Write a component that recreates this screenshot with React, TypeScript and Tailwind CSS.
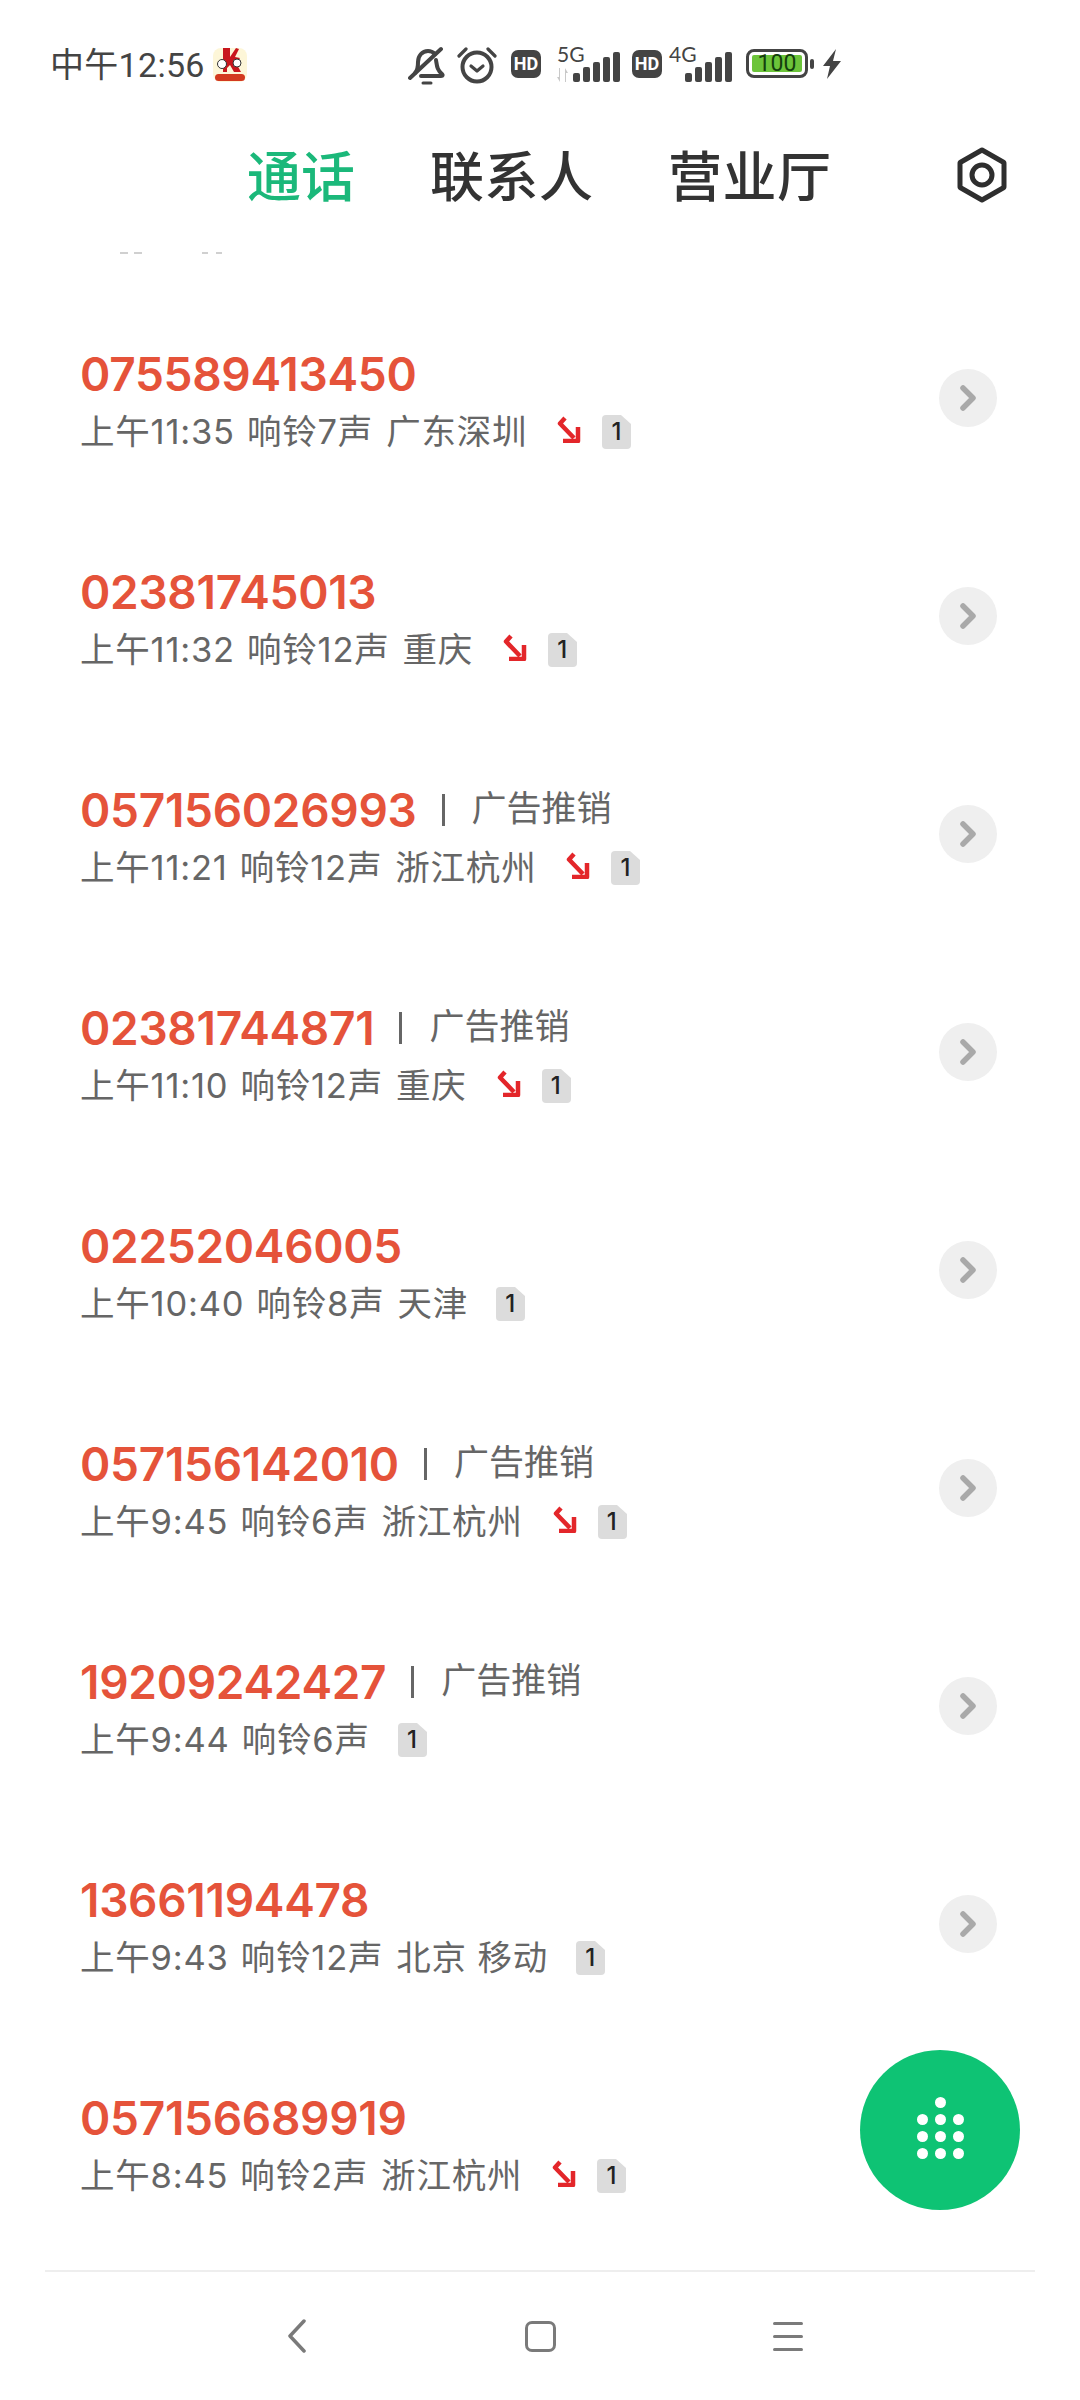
import React from 'react';

type Call = {
  number: string;
  tag?: boolean;
  time: string;
  ring: string;
  place: string;
  missed: boolean;
};

const calls: Call[] = [
  { number: '075589413450', time: '上午11:35', ring: '响铃7声', place: '广东深圳', missed: true },
  { number: '02381745013', time: '上午11:32', ring: '响铃12声', place: '重庆', missed: true },
  { number: '057156026993', tag: true, time: '上午11:21', ring: '响铃12声', place: '浙江杭州', missed: true },
  { number: '02381744871', tag: true, time: '上午11:10', ring: '响铃12声', place: '重庆', missed: true },
  { number: '02252046005', time: '上午10:40', ring: '响铃8声', place: '天津', missed: false },
  { number: '057156142010', tag: true, time: '上午9:45', ring: '响铃6声', place: '浙江杭州', missed: true },
  { number: '19209242427', tag: true, time: '上午9:44', ring: '响铃6声', place: '', missed: false },
  { number: '13661194478', time: '上午9:43', ring: '响铃12声', place: '北京 移动', missed: false },
  { number: '057156689919', time: '上午8:45', ring: '响铃2声', place: '浙江杭州', missed: true },
];

const Signal = () => (
  <svg width="47" height="30" viewBox="0 0 47 30" className="absolute right-0 bottom-0">
    <rect x="0" y="21" width="7" height="9" rx="2" fill="#444" />
    <rect x="10" y="15" width="7" height="15" rx="2" fill="#444" />
    <rect x="20" y="10" width="7" height="20" rx="2" fill="#444" />
    <rect x="30" y="5" width="7" height="25" rx="2" fill="#444" />
    <rect x="40" y="0" width="7" height="30" rx="2" fill="#444" />
  </svg>
);

const HdBadge = () => (
  <div className="w-[30px] h-[28px] rounded-[7px] bg-[#444] flex items-center justify-center text-white text-[18px] font-bold leading-none">
    HD
  </div>
);

const StatusBar = () => (
  <div className="h-[128px] shrink-0 pl-[50px] pt-[44px] flex items-start text-[#444]">
    <span className="w-[154px] whitespace-nowrap text-[34px] leading-[42px] font-normal tracking-[0.3px]">中午12:56</span>
    <svg width="36" height="36" viewBox="0 0 36 36" className="ml-[8px] mt-[3px]">
      <rect x="1" y="1" width="34" height="34" rx="8" fill="#fdf6d8" />
      <path d="M11 1h7v9l6-9 3 1-4 8 5 1-4 5 5 9h-7l-4-7-3 3v4h-4z" fill="#c8161d" />
      <circle cx="10" cy="17" r="4.5" fill="#fff" stroke="#333" strokeWidth="1" />
      <circle cx="25" cy="16" r="4" fill="#fff" stroke="#333" strokeWidth="1" />
      <rect x="3" y="27" width="30" height="7" rx="3.5" fill="#d3391f" />
    </svg>
    <div className="ml-[160px] flex items-start">
      <svg width="38" height="40" viewBox="0 0 38 40" className="mt-[2px]" fill="none" stroke="#444" strokeLinecap="round" strokeLinejoin="round">
        <path d="M7 27c3-3 3-6 3-11 0-6 4-11 10-11 3 0 5 1 7 3" strokeWidth="4" />
        <path d="M28 14c1 6 1 10 6 14 1 1 1 2-1 2H13" strokeWidth="4" />
        <path d="M2 32 33 3" strokeWidth="4" />
        <path d="M15 37h8" strokeWidth="3" />
      </svg>
      <svg width="40" height="38" viewBox="0 0 40 38" className="ml-[11px] mt-[2px]" fill="none" stroke="#444" strokeLinecap="round" strokeLinejoin="round">
        <circle cx="20" cy="21" r="14.5" strokeWidth="4" />
        <path d="M14 20l6 5 6-5" strokeWidth="3.2" />
        <path d="M2 10 9 3M38 10l-7-7" strokeWidth="3.2" />
      </svg>
      <div className="ml-[14px] mt-[6px]">
        <HdBadge />
      </div>
      <div className="relative ml-[16px] w-[63px] h-[36px] mt-[2px]">
        <span className="absolute left-0 top-[-3px] text-[21px] leading-[22px]" style={{ fontFamily: 'Lato, sans-serif' }}>5G</span>
        <svg width="14" height="14" viewBox="0 0 14 14" className="absolute left-0 bottom-0">
          <path d="M2 0v9H0l3 5V0zM9 14V5h2L8 0v14z" fill="#c9c9c9" />
        </svg>
        <Signal />
      </div>
      <div className="ml-[12px] mt-[6px]">
        <HdBadge />
      </div>
      <div className="relative ml-[7px] w-[63px] h-[36px] mt-[2px]">
        <span className="absolute left-0 top-[-3px] text-[21px] leading-[22px]" style={{ fontFamily: 'Lato, sans-serif' }}>4G</span>
        <Signal />
      </div>
      <div className="ml-[14px] mt-[5px] w-[62px] h-[29px] rounded-[8px] border-[3px] border-[#444] p-[3px] flex">
        <div className="flex-1 rounded-[2px] bg-[#6cc43a] flex items-center justify-center text-[#14400e] text-[23px] leading-none">100</div>
      </div>
      <div className="ml-[2px] mt-[15px] w-[4px] h-[10px] rounded-[2px] bg-[#444]" />
      <svg width="20" height="30" viewBox="0 0 20 30" className="ml-[8px] mt-[5px]">
        <path d="M14 0 1 17h7L5 30l14-18h-8z" fill="#444" />
      </svg>
    </div>
  </div>
);

const Header = () => (
  <div className="relative h-[128px] shrink-0 flex items-start pl-[247px] pt-[19px] text-[54px] leading-[64px] font-medium text-[#333] whitespace-nowrap">
    <span className="text-[#1bb87a] w-[108px]">通话</span>
    <span className="ml-[75px] w-[165px] tracking-[0.5px]">联系人</span>
    <span className="ml-[73px] w-[165px] tracking-[0.5px]">营业厅</span>
    <svg width="52" height="56" viewBox="0 0 52 56" className="ml-[123px]" fill="none" stroke="#2e2e2e">
      <path d="M26 3 47 15a2 2 0 0 1 1 2v22a2 2 0 0 1-1 2L26 53 5 41a2 2 0 0 1-1-2V17a2 2 0 0 1 1-2z" strokeWidth="5" strokeLinejoin="round" />
      <circle cx="26" cy="28" r="10" strokeWidth="5" />
    </svg>
    {/* remains of the row scrolled away under the header */}
    <svg width="110" height="8" viewBox="0 0 110 8" className="absolute left-[118px] bottom-0" fill="#d0d0d0">
      <rect x="2" y="4" width="8" height="2" />
      <rect x="16" y="4" width="8" height="2" />
      <rect x="84" y="4" width="6" height="2" />
      <rect x="98" y="4" width="6" height="2" />
    </svg>
  </div>
);

const MissedArrow = () => (
  <svg width="24" height="28" viewBox="0 0 24 28" className="ml-[30px] mb-[6px]" fill="none" stroke="#e3262a" strokeWidth="4.5" strokeLinejoin="round">
    <path d="M8 3 3 8.5 17 23" />
    <path d="M21 12v14H6" />
  </svg>
);

const SimBadge = ({ missed }: { missed: boolean }) => (
  <div
    className={`relative w-[29px] h-[34px] flex items-center justify-center text-[24px] leading-none font-medium text-[#222] ${
      missed ? 'ml-[21px]' : 'ml-[28px]'
    }`}
  >
    <svg width="29" height="34" viewBox="0 0 29 34" className="absolute inset-0">
      <path d="M4 0h15l10 9v21a4 4 0 0 1-4 4H4a4 4 0 0 1-4-4V4a4 4 0 0 1 4-4z" fill="#dcdcdc" />
    </svg>
    <span className="relative">1</span>
  </div>
);

const CallRow = ({ call }: { call: Call }) => (
  <div className="h-[218px] shrink-0 flex items-center pl-[80px] pr-[83px]">
    <div className="flex-1 pt-[8px]">
      <div className="flex items-center h-[52px]">
        <span className="text-[46px] leading-[52px] font-semibold tracking-[-0.3px] text-[#e5533a]" style={{ fontFamily: 'Inter, sans-serif' }}>
          {call.number}
        </span>
        {call.tag && (
          <>
            <span className="ml-[25px] w-[3px] h-[32px] bg-[#666]" />
            <span className="ml-[27px] text-[35px] leading-[40px] text-[#666]">广告推销</span>
          </>
        )}
      </div>
      <div
        className="mt-[7px] flex items-center h-[50px] text-[34.5px] tracking-[0.8px] text-[#666] whitespace-nowrap"
        style={{ fontFamily: 'Inter, "Noto Sans CJK SC", sans-serif' }}
      >
        <span>{call.time}</span>
        <span className="ml-[12px]">{call.ring}</span>
        {call.place && <span className="ml-[13px]">{call.place}</span>}
        {call.missed && <MissedArrow />}
        <SimBadge missed={call.missed} />
      </div>
    </div>
    <div className="w-[58px] h-[58px] rounded-full bg-[#efefef] flex items-center justify-center">
      <svg width="18" height="26" viewBox="0 0 18 26" fill="none" stroke="#a9a9a9" strokeWidth="5.5" strokeLinecap="round" strokeLinejoin="round">
        <path d="M4 3l10 10L4 23" />
      </svg>
    </div>
  </div>
);

const BottomNav = () => (
  <div className="h-[130px] shrink-0 px-[45px] bg-white">
    <div className="h-full border-t-2 border-[#eeeeee] flex items-center">
      <svg width="20" height="34" viewBox="0 0 20 34" className="ml-[242px]" fill="none" stroke="#7a7a7a" strokeWidth="3.5" strokeLinecap="round" strokeLinejoin="round">
        <path d="M17 2 3 17l14 15" />
      </svg>
      <div className="ml-[218px] w-[31px] h-[31px] rounded-[7px] border-[3.5px] border-[#7a7a7a]" />
      <div className="ml-[217px] w-[30px] flex flex-col gap-y-[10px]">
        <div className="h-[3px] rounded-full bg-[#7a7a7a]" />
        <div className="h-[3px] rounded-full bg-[#7a7a7a]" />
        <div className="h-[3px] rounded-full bg-[#7a7a7a]" />
      </div>
    </div>
  </div>
);

const DialFab = () => (
  <div className="absolute left-[860px] top-[2050px] w-[160px] h-[160px] pb-[5px] rounded-full bg-[#0ec374] flex flex-col items-center justify-center gap-y-[6px]">
    <div className="w-[11px] h-[11px] rounded-full bg-white" />
    {[0, 1, 2].map((r) => (
      <div key={r} className="flex gap-x-[7px]">
        <div className="w-[11px] h-[11px] rounded-full bg-white" />
        <div className="w-[11px] h-[11px] rounded-full bg-white" />
        <div className="w-[11px] h-[11px] rounded-full bg-white" />
      </div>
    ))}
  </div>
);

export default function App() {
  return (
    <div
      className="relative w-[1080px] h-[2400px] overflow-hidden bg-white flex flex-col"
      style={{ fontFamily: 'Roboto, "Noto Sans CJK SC", sans-serif' }}
    >
      <StatusBar />
      <Header />
      <div className="flex-1 min-h-0 overflow-hidden flex flex-col pt-[33px]">
        {calls.map((c) => (
          <CallRow key={c.number} call={c} />
        ))}
      </div>
      <BottomNav />
      <DialFab />
    </div>
  );
}
